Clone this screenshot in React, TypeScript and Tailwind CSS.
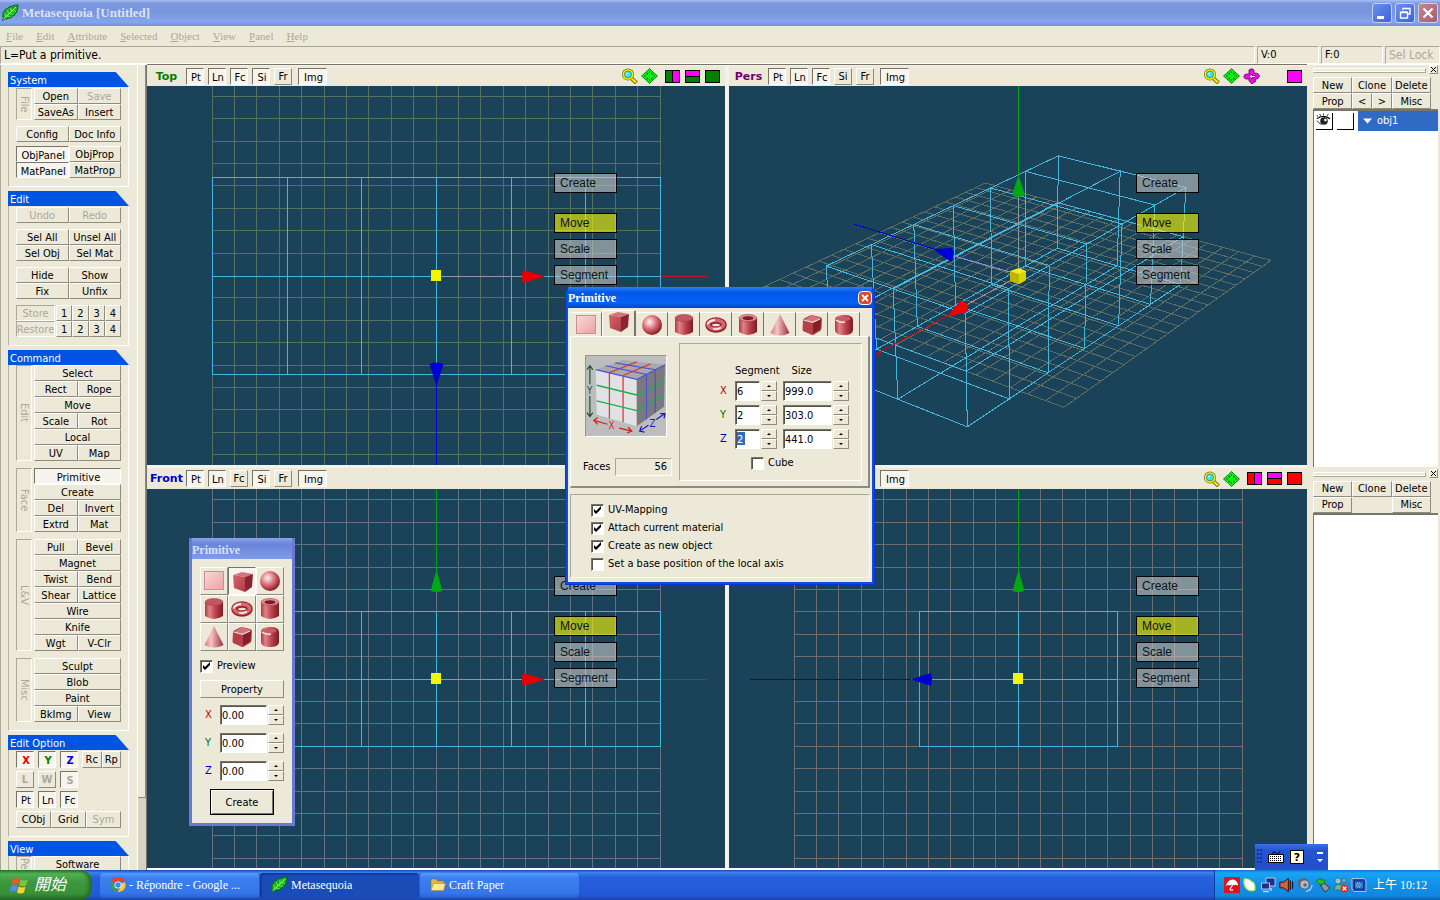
import React from "react";

type Pt = [number, number];

const RAISED = "border border-t-white border-l-white border-b-[#8e8b7c] border-r-[#8e8b7c] bg-[#ece9d8]";
const PRESSED = "border border-t-[#77756a] border-l-[#77756a] border-b-white border-r-white bg-[#f6f4ec] pt-0.5 pl-0.5";
const ETCHED = "border border-t-[#aca899] border-l-[#aca899] border-b-white border-r-white";

function Btn({ children, className = "", pressed, disabled }: { children: React.ReactNode; className?: string; pressed?: boolean; disabled?: boolean }) {
  return (
    <button
      type="button"
      disabled={disabled}
      className={`flex h-4 min-w-0 items-center justify-center overflow-hidden leading-none whitespace-nowrap ${pressed ? PRESSED : RAISED} ${disabled ? "text-[#aca899]" : ""} ${className}`}
    >
      {children}
    </button>
  );
}

/* ---------- left tool panel ---------- */

function Section({ title, children, className = "" }: { title: string; children: React.ReactNode; className?: string }) {
  return (
    <section className="mb-1 flex shrink-0 flex-col">
      <h2 className="h-[15px] bg-[#0054e3] pt-0.5 pl-0.5 leading-[13px] text-white [clip-path:polygon(0_0,89%_0,100%_100%,0_100%)]">{title}</h2>
      <div className={`flex flex-col border-r border-b border-l border-r-white border-b-white border-l-[#b5b19f] px-[7px] pb-2 ${className}`}>{children}</div>
    </section>
  );
}

function Tools({ label, rows }: { label: string; rows: string[][] }) {
  return (
    <div className="flex gap-0.5">
      <div className={`flex w-4 items-center justify-center leading-none text-[#aca899] [writing-mode:vertical-rl] ${ETCHED}`}>{label}</div>
      <div className="flex flex-1 flex-col">
        {rows.map((row, i) => (
          <div key={i} className="flex">
            {row.map((t) => (
              <Btn key={t} className="flex-1" pressed={t === "Primitive"} disabled={t === "Save"}>
                {t}
              </Btn>
            ))}
          </div>
        ))}
      </div>
    </div>
  );
}

function Pairs({ rows, off = [], down = [] }: { rows: string[][]; off?: string[]; down?: string[] }) {
  return (
    <div className="grid grid-cols-2">
      {rows.flat().map((t) => (
        <Btn key={t} disabled={off.includes(t)} pressed={down.includes(t)}>
          {t}
        </Btn>
      ))}
    </div>
  );
}

function ToolPanel() {
  return (
    <aside className="flex w-[147px] shrink-0 overflow-hidden border-t border-white">
      <div className="flex w-[137px] flex-col overflow-hidden border-l border-[#aca899] pt-[7px] pr-2 pl-[7px]">
        <Section title="System" className="gap-1 pt-px">
          <div className="mb-0.5">
            <Tools label="File" rows={[["Open", "Save"], ["SaveAs", "Insert"]]} />
          </div>
          <Pairs rows={[["Config", "Doc Info"]]} />
          <Pairs rows={[["ObjPanel", "ObjProp"], ["MatPanel", "MatProp"]]} down={["ObjPanel", "MatPanel"]} />
        </Section>
        <Section title="Edit" className="gap-1.5 pt-px">
          <Pairs rows={[["Undo", "Redo"]]} off={["Undo", "Redo"]} />
          <Pairs rows={[["Sel All", "Unsel All"], ["Sel Obj", "Sel Mat"]]} />
          <Pairs rows={[["Hide", "Show"], ["Fix", "Unfix"]]} />
          <div className="flex flex-col">
            {["Store", "Restore"].map((t) => (
              <div key={t} className="flex gap-px">
                <div className={`flex h-4 w-[39px] items-center justify-center overflow-hidden leading-none text-[#aca899] ${ETCHED}`}>{t}</div>
                <div className="grid flex-1 grid-cols-4">
                  {["1", "2", "3", "4"].map((n) => (
                    <Btn key={n}>{n}</Btn>
                  ))}
                </div>
              </div>
            ))}
          </div>
        </Section>
        <Section title="Command" className="gap-[7px]">
          <Tools label="Edit" rows={[["Select"], ["Rect", "Rope"], ["Move"], ["Scale", "Rot"], ["Local"], ["UV", "Map"]]} />
          <Tools label="Face" rows={[["Primitive"], ["Create"], ["Del", "Invert"], ["Extrd", "Mat"]]} />
          <Tools label="L&V" rows={[["Pull", "Bevel"], ["Magnet"], ["Twist", "Bend"], ["Shear", "Lattice"], ["Wire"], ["Knife"], ["Wgt", "V-Clr"]]} />
          <Tools label="Misc" rows={[["Sculpt"], ["Blob"], ["Paint"], ["BkImg", "View"]]} />
        </Section>
        <Section title="Edit Option" className="gap-[3px] pt-px">
          <div className="flex gap-1">
            <Btn pressed className="h-[17px] w-[18px] font-bold text-[#e00000]">X</Btn>
            <Btn pressed className="h-[17px] w-[18px] font-bold text-[#008000]">Y</Btn>
            <Btn pressed className="h-[17px] w-[18px] font-bold text-[#0000e0]">Z</Btn>
            <div className="grid flex-1 grid-cols-2">
              <Btn className="h-[17px]">Rc</Btn>
              <Btn className="h-[17px]">Rp</Btn>
            </div>
          </div>
          <div className="flex gap-1">
            <Btn disabled className="h-[17px] w-[18px] font-bold">L</Btn>
            <Btn disabled className="h-[17px] w-[18px] font-bold">W</Btn>
            <Btn disabled pressed className="h-[17px] w-[18px] font-bold">S</Btn>
          </div>
          <div className="flex gap-1">
            <Btn pressed className="h-[17px] w-[18px]">Pt</Btn>
            <Btn pressed className="h-[17px] w-[18px]">Ln</Btn>
            <Btn pressed className="h-[17px] w-[18px]">Fc</Btn>
          </div>
          <div className="grid grid-cols-3">
            <Btn className="h-[17px]">CObj</Btn>
            <Btn className="h-[17px]">Grid</Btn>
            <Btn disabled className="h-[17px]">Sym</Btn>
          </div>
        </Section>
        <Section title="View">
          <Tools label="Pe" rows={[["Software"]]} />
        </Section>
      </div>
      <div className="flex flex-1 flex-col border-r border-l border-r-[#77756a] border-l-white bg-[#d6d3c4]">
        <div className="h-[91%] border-r border-b border-[#8e8b7c] bg-[#ece9d8]" />
      </div>
    </aside>
  );
}

/* ---------- viewports ---------- */

const CYAN = "#45b5da";
const steps = (n: number) => Array.from({ length: 2 * n + 1 }, (_, i) => i - n);

function Cone({ dir, color }: { dir: "up" | "down" | "left" | "right"; color: string }) {
  const d = {
    up: "M0.5 -109L6.500 -88Q0.500 -86 -5.500 -88Z",
    down: "M0.500 110L7.500 88Q0.500 85 -6.500 88Z",
    left: "M-107 0.500L-87 -6Q-85 0.500 -87 7Z",
    right: "M109 0.500L87 -6Q85 0.500 87 7Z",
  }[dir];
  return <path d={d} fill={color} />;
}

interface OrthoProps {
  grid: string;
  halfW: number;
  top: number;
  bottom: number;
  segs: number;
  kind: "top" | "front" | "left";
}

function Ortho({ grid, halfW, top, bottom, segs, kind }: OrthoProps) {
  const cell = 22.4;
  const shift = kind === "top" ? 0.5 : 0;
  return (
    <svg viewBox="-289 -190 578 379" preserveAspectRatio="xMidYMid slice" className="absolute inset-0 h-full w-full">
      <g shapeRendering="crispEdges" strokeWidth="1">
        <g stroke={grid}>
          {steps(10).map((i) => {
            const x = Math.floor(i * cell) + 0.5;
            const y = Math.floor(i * cell - shift) + 0.5;
            return (
              <g key={i}>
                <line x1={x} x2={x} y1={-224} y2={224} />
                {i !== 0 && <line y1={y} y2={y} x1={-224} x2={224} />}
              </g>
            );
          })}
          <line x1={-224} x2={224} y1={0.5} y2={0.5} />
        </g>
        <g stroke={CYAN} fill="none">
          <rect x={-halfW + 0.5} y={top + 0.5} width={halfW * 2} height={bottom - top} />
          {steps(segs / 2).map((i) => {
            const x = Math.round((i * halfW * 2) / segs) + 0.5;
            return <line key={i} x1={x} x2={x} y1={top} y2={bottom} />;
          })}
          <line x1={-halfW} x2={halfW} y1={0.5} y2={0.5} />
        </g>
        {kind !== "left" && (
          <>
            <line x1={10} x2={88} y1={0.5} y2={0.5} stroke="#8f96a8" />
            <line x1={225} x2={271} y1={0.5} y2={0.5} stroke="#c81830" />
          </>
        )}
        {kind === "left" && (
          <>
            <line x1={-88} x2={-10} y1={0.5} y2={0.5} stroke="#7b96c8" />
            <line x1={-268} x2={-107} y1={0.5} y2={0.5} stroke="#0000d8" />
          </>
        )}
        {kind === "top" ? (
          <line x1={0.5} x2={0.5} y1={108} y2={190} stroke="#0000d8" />
        ) : (
          <line x1={0.5} x2={0.5} y1={-190} y2={-107} stroke="#00a010" />
        )}
      </g>
      {kind === "top" ? <Cone dir="down" color="#0000d4" /> : <Cone dir="up" color="#00a814" />}
      {kind === "left" ? <Cone dir="left" color="#0000d4" /> : <Cone dir="right" color="#e80000" />}
      <rect x="-5" y="-6" width="10" height="11" fill="#f5f500" />
    </svg>
  );
}

const SIN_P = 0.42;
const COS_P = 0.9075;
const SIN_A = 0.597;
const COS_A = 0.8022;

function project(x: number, y: number, z: number): Pt {
  const xc = -SIN_A * x - COS_A * z;
  const yc = -SIN_P * COS_A * x + COS_P * y + SIN_P * SIN_A * z;
  const zc = COS_P * COS_A * x + SIN_P * y - COS_P * SIN_A * z;
  const w = 1 - zc / 3714;
  return [(0.3705 * xc) / w, (-0.3705 * yc) / w];
}

function path(points: number[][], close = false) {
  return "M" + points.map(([x, y, z]) => project(x, y, z).map((v) => v.toFixed(1)).join(" ")).join("L") + (close ? "Z" : "");
}

const floorPath = steps(10)
  .map((i) => path([[i * 50, 0, -500], [i * 50, 0, 500]]) + path([[-500, 0, i * 50], [500, 0, i * 50]]))
  .join("");
const W = 499.5;
const H = 151.5;
const D = 220.5;
const boxPath = [
  ...steps(3).map((i) => path([[(i * W) / 3, -H, -D], [(i * W) / 3, H, -D], [(i * W) / 3, H, D], [(i * W) / 3, -H, D]], true)),
  ...steps(1).map((i) => path([[-W, i * H, -D], [W, i * H, -D], [W, i * H, D], [-W, i * H, D]], true)),
  ...steps(1).map((i) => path([[-W, -H, i * D], [W, -H, i * D], [W, H, i * D], [-W, H, i * D]], true)),
].join("");

function Perspective() {
  return (
    <svg viewBox="-289 -190 578 379" preserveAspectRatio="xMidYMid slice" className="absolute inset-0 h-full w-full">
      <g shapeRendering="crispEdges" fill="none">
        <path d={floorPath} stroke="#5f6c60" />
        <path d={boxPath} stroke={CYAN} />
        <path d="M0.5 -80V-8" stroke="#8a9aa0" />
        <path d="M-64 -20L-8 -4" stroke="#8a8ad8" />
        <path d="M-50 28L-8 5" stroke="#b08a98" />
        <path d="M0.5 -190V-100" stroke="#00a814" />
        <path d="M-164 -52L-78 -25" stroke="#0000c8" />
        <path d="M-69 39L-145 80" stroke="#d80010" />
      </g>
      <path d="M0.5 -101L7 -81Q0.5 -77 -6 -81Z" fill="#00a814" />
      <path d="M-85 -27L-66 -28Q-62 -21 -67 -14Z" fill="#0000d4" />
      <path d="M-71 41L-58 25Q-50 25 -50 34Q-52 37 -56 37Z" fill="#f00000" />
      <path d="M-8 -5L1 -8L8 -5V4L1 8L-8 5Z" fill="#f4ec20" />
      <path d="M-8 -5L1 -2V8L-8 5Z" fill="#c0b400" />
      <path d="M1 -2L8 -5V4L1 8Z" fill="#dcd400" />
    </svg>
  );
}

function Gizmo() {
  return (
    <div className="absolute top-1/2 left-1/2 -mt-[103px] ml-[118px] flex w-[63px] flex-col gap-1.5 font-['Liberation_Sans',sans-serif] text-[12px]">
      {["Create", "Move", "Scale", "Segment"].map((t) => (
        <button
          key={t}
          type="button"
          className={`h-5 border border-black pl-[5px] text-left leading-[18px] text-[#101418] ${t === "Create" ? "mb-3.5" : ""} ${t === "Move" ? "bg-[#ffff00]/60" : "bg-[#c8c8c8]/60"}`}
        >
          {t}
        </button>
      ))}
    </div>
  );
}

function Magnifier() {
  return (
    <svg width="17" height="16" viewBox="0 0 17 16">
      <path d="M9.5 9.5L15.500 15" stroke="#6b6b00" strokeWidth="3.8" />
      <path d="M9.5 9.5L15 14.5" stroke="#f8f000" strokeWidth="2.2" />
      <circle cx="7" cy="6.500" r="6" fill="#77760a" />
      <circle cx="7" cy="6.500" r="5.300" fill="#f8f000" />
      <circle cx="7" cy="6.500" r="3.500" fill="#30e8f0" stroke="#446" strokeWidth="0.6" />
      <path d="M5.500 6.500Q5.500 5 7 5" stroke="#fff" fill="none" />
    </svg>
  );
}

function PanIcon() {
  return (
    <svg width="17" height="16" viewBox="0 0 17 16">
      <path d="M8.500 0.500L11.500 3.500L16.500 8L11.500 12.500L8.500 15.500L5.500 12.500L0.500 8L5.500 3.500Z" fill="#10f018" stroke="#006a00" strokeWidth="0.8" />
      <path d="M5.500 4.800h1.600v1.600h-1.600zM10 4.800h1.600v1.600H10zM5.500 9.800h1.600v1.600h-1.600zM10 9.800h1.600v1.600H10z" fill="#006a00" />
      <path d="M8.500 3v2M8.500 11v2M3 8h2M12 8h2" stroke="#006a00" strokeWidth="0.800" />
    </svg>
  );
}

function OrbitIcon() {
  return (
    <svg width="17" height="16" viewBox="0 0 17 16">
      <path d="M6 2Q8.500 -0.500 11 2V5Q16 5 16.500 8Q16 11 12 11.500V13H13L9 16L6 13V11Q1 11.500 0.800 8.500Q1 6 4 6H6Z" fill="#e810e8" stroke="#600060" strokeWidth="0.8" />
      <path d="M6 8.500L9 6V7.500H12Q13 8.500 11.500 9.500H9V11Z" fill="#ece9d8" stroke="#600060" strokeWidth="0.7" />
    </svg>
  );
}

function Square({ base, split }: { base: string; split?: "v" | "h" }) {
  return (
    <svg width="15" height="13" viewBox="0 0 15 13" shapeRendering="crispEdges">
      <rect x="0.5" y="0.5" width="14" height="12" fill={base} stroke="#000" />
      {split === "v" && <rect x="7.500" y="0.5" width="7" height="12" fill="#ff00ff" stroke="#000" />}
      {split === "h" && <rect x="0.5" y="0.5" width="14" height="6" fill="#ff00ff" stroke="#000" />}
    </svg>
  );
}

interface ViewProps {
  name: string;
  color: string;
  up?: string[];
  square: string;
  pers?: boolean;
  tall?: boolean;
  children: React.ReactNode;
}

function Viewport({ name, color, up = [], square, pers, tall, children }: ViewProps) {
  return (
    <section className="flex min-h-0 min-w-0 flex-col">
      <header className={`flex shrink-0 items-center bg-[#ece9d8] pr-[5px] ${tall ? "h-[21px]" : "h-5"}`}>
        <span className={`w-[39px] text-center font-['DejaVu_Sans',sans-serif] text-[11px] leading-none font-bold ${color}`}>{name}</span>
        <div className="flex gap-1">
          {["Pt", "Ln", "Fc", "Si", "Fr"].map((t) => (
            <Btn key={t} pressed={!up.includes(t)} className="h-[17px] w-[18px]">
              {t}
            </Btn>
          ))}
          <Btn pressed className="ml-0.5 h-[17px] w-[29px]">Img</Btn>
        </div>
        <div className="ml-auto flex items-center gap-[3px]">
          <Magnifier />
          <PanIcon />
          {pers && <OrbitIcon />}
          <div className={`flex gap-[5px] ${pers ? "ml-6" : "ml-1"}`}>
            {!pers && <Square base={square} split="v" />}
            {!pers && <Square base={square} split="h" />}
            <Square base={square} />
          </div>
        </div>
      </header>
      <div className="relative flex-1 overflow-hidden bg-[#1a4259]">
        {children}
        <Gizmo />
      </div>
    </section>
  );
}

/* ---------- primitive shapes ---------- */

function ShapeDefs() {
  return (
    <svg className="absolute h-0 w-0" aria-hidden="true">
      <defs>
        <linearGradient id="plane" x1="0" y1="0" x2="1" y2="1">
          <stop offset="0" stopColor="#fbd9d9" />
          <stop offset="1" stopColor="#eba0a4" />
        </linearGradient>
        <linearGradient id="side" x1="0" x2="1">
          <stop offset="0" stopColor="#b03a42" />
          <stop offset="0.25" stopColor="#e08288" />
          <stop offset="0.6" stopColor="#b8404a" />
          <stop offset="1" stopColor="#7c1c26" />
        </linearGradient>
        <linearGradient id="cone" x1="0" x2="1">
          <stop offset="0" stopColor="#d87880" />
          <stop offset="0.35" stopColor="#f6c4c6" />
          <stop offset="1" stopColor="#9c2c36" />
        </linearGradient>
        <linearGradient id="face" x1="0" y1="0" x2="1" y2="1">
          <stop offset="0" stopColor="#d4646c" />
          <stop offset="1" stopColor="#b03c46" />
        </linearGradient>
        <radialGradient id="ball" cx="0.38" cy="0.35" r="0.65">
          <stop offset="0" stopColor="#fff4f4" />
          <stop offset="0.5" stopColor="#dd7880" />
          <stop offset="1" stopColor="#8c1e2a" />
        </radialGradient>
      </defs>
    </svg>
  );
}

const SHAPES = ["plane", "cube", "sphere", "cylinder", "torus", "tube", "cone", "round cube", "round cylinder"];

function Shape({ kind }: { kind: string }) {
  return (
    <svg width="24" height="24" viewBox="0 0 24 24">
      {kind === "plane" && <rect x="2.500" y="2.500" width="19" height="18" fill="url(#plane)" stroke="#c89090" />}
      {kind === "cube" && (
        <>
          <path d="M2 5L11 2L22 4L14 7Z" fill="#d4747c" />
          <path d="M2 5L14 7V22L3 18Z" fill="url(#face)" />
          <path d="M14 7L22 4L21 17L14 22Z" fill="#8c242e" />
        </>
      )}
      {kind === "sphere" && <circle cx="12" cy="12" r="10" fill="url(#ball)" />}
      {(kind === "cylinder" || kind === "tube") && (
        <>
          <path d="M3 5V19Q12 25 21 19V5Z" fill="url(#side)" />
          <ellipse cx="12" cy="5" rx="9" ry="3.500" fill={kind === "tube" ? "#e08c92" : "#c25660"} stroke="#a03a44" strokeWidth="0.5" />
          {kind === "tube" && <ellipse cx="12" cy="5.200" rx="5.500" ry="2" fill="#7a1c26" />}
        </>
      )}
      {kind === "torus" && (
        <>
          <ellipse cx="12" cy="12" rx="7.500" ry="4.500" fill="none" stroke="#98222c" strokeWidth="6.400" />
          <ellipse cx="11.800" cy="11.600" rx="7.800" ry="4.500" fill="none" stroke="#d4686e" strokeWidth="3.600" />
          <path d="M3.500 11.500Q5 7.500 11 7M9 15.500Q13 17 17 14.500" stroke="#ffecec" strokeWidth="1.800" fill="none" />
        </>
      )}
      {kind === "cone" && <path d="M12 1L21.500 20Q12 25 2.500 20Z" fill="url(#cone)" />}
      {kind === "round cube" && (
        <>
          <path d="M3 7Q3 6 4 5.500L10 2.500Q12 2 14 2.500L20 4Q22 4.500 22 6L21.500 15Q21.500 17 20 18L14 21.500Q12.500 22.500 11 21.500L4 18.500Q2.500 18 2.500 16Z" fill="#b4404a" />
          <path d="M3.500 7L11 3Q12.500 2.500 14 3L21 5L13 9Z" fill="#d4747a" />
          <path d="M13 9.500L21 6L20.500 16L13 21Z" fill="#861e2a" />
          <path d="M3.500 7L12.500 9.300L20 6" stroke="#f8d4d4" strokeWidth="1.200" fill="none" />
        </>
      )}
      {kind === "round cylinder" && (
        <>
          <path d="M3 7Q3 2 12 2Q21 2 21 7V17Q21 22 12 22Q3 22 3 17Z" fill="url(#side)" />
          <ellipse cx="12" cy="5.500" rx="6.500" ry="2.500" fill="#c65c66" />
          <path d="M4 7Q7 10 13 9" stroke="#fbe4e4" strokeWidth="1.500" fill="none" />
        </>
      )}
    </svg>
  );
}

/* ---------- form controls ---------- */

function Check({ label, checked }: { label: string; checked?: boolean }) {
  return (
    <label className="flex h-[18px] items-center gap-1">
      <span className="relative flex h-[13px] w-[13px]">
        <input type="checkbox" defaultChecked={checked} className="peer h-[13px] w-[13px] appearance-none border border-t-[#77756a] border-l-[#77756a] border-b-white border-r-white bg-white shadow-[inset_1px_1px_0_#55534a]" />
        <svg viewBox="0 0 13 13" className="pointer-events-none absolute inset-0 hidden peer-checked:block">
          <path d="M3 5v3l2 2 5-5V2L5 7z" fill="#000" />
        </svg>
      </span>
      {label}
    </label>
  );
}

function Spin({ label, value, width, selected }: { label: string; value: string; width: string; selected?: boolean }) {
  return (
    <span className="flex gap-px">
      <input
        aria-label={label}
        defaultValue={value}
        className={`h-5 border border-t-[#77756a] border-l-[#77756a] border-b-white border-r-white bg-white pl-px leading-none shadow-[inset_1px_1px_0_#55534a] outline-none ${width} ${selected ? "bg-[linear-gradient(#316ac5,#316ac5)] bg-[length:8px_13px] bg-[position:1px_2px] bg-no-repeat text-white" : ""}`}
      />
      <span className="flex flex-col">
        {["M2 4L4 2L6 4Z", "M2 2L4 4L6 2Z"].map((d) => (
          <button key={d} type="button" aria-label={label} className={`flex h-2.5 w-4 items-center justify-center ${RAISED}`}>
            <svg width="8" height="6" viewBox="0 0 8 6">
              <path d={d} />
            </svg>
          </button>
        ))}
      </span>
    </span>
  );
}

const AXES = [
  { axis: "X", color: "text-[#c00000]" },
  { axis: "Y", color: "text-[#007000]" },
  { axis: "Z", color: "text-[#0000c0]" },
];

function CubeDiagram() {
  return (
    <svg width="82" height="82" viewBox="0 0 82 82" className="border border-t-[#9a9788] border-l-[#9a9788] border-r-white border-b-white bg-[#bdbdbd]">
      <path d="M10 14L38 4L81 9L52 24Z" fill="#a9a9a9" />
      <path d="M10 14L52 24V72L11 60Z" fill="#e2e2e4" />
      <path d="M52 24L81 9L80 52L52 72Z" fill="#7a7a7e" />
      <path d="M24 17V64M38 20V68M24 17L52 6M38 20L66 8" stroke="#e03838" fill="none" strokeWidth="1.300" />
      <path d="M11 30L52 40L80 26M11 46L52 56L80 40" stroke="#18b050" fill="none" strokeWidth="1.400" />
      <path d="M10 14L52 24L81 9M20 10L62 19V65M30 7L71 14V58" stroke="#4a50e0" fill="none" strokeWidth="1.200" />
      <g fill="none" strokeWidth="1.200">
        <path d="M4 10V29M4 41V62M1 14L4 10L7 14M1 58L4 62L7 58" stroke="#0a5a2a" />
        <path d="M8 66L22 70M34 74L47 77M12 63L8 66L12 70M43 73L47 77L42 79" stroke="#e01818" />
        <path d="M55 77L64 71M72 65L81 59M57 72L55 77L60 78M76 59L81 59L80 64" stroke="#1818c8" />
      </g>
      <g fontFamily="DejaVu Sans Condensed, DejaVu Sans, sans-serif" fontSize="10">
        <text x="1" y="39" fill="#0a5a2a">Y</text>
        <text x="23" y="75" fill="#e01818">X</text>
        <text x="65" y="73" fill="#1818c8">Z</text>
      </g>
    </svg>
  );
}

function PrimitiveDialog() {
  return (
    <div role="dialog" aria-label="Primitive" className="absolute top-[287px] left-[565px] flex w-[310px] flex-col rounded-t-md bg-[#0a4fe0] px-[3px] pb-[3px] shadow-[inset_0_0_0_1px_#0831d9]">
      <div className="flex h-[21px] items-center justify-between bg-[linear-gradient(#2a80f8,#0558e8_25%,#0462f4_75%,#0346c8)] pt-px font-['Liberation_Serif',serif] text-[12px] font-bold text-white">
        <span>Primitive</span>
        <button type="button" aria-label="Close" className="flex h-[14px] w-[14px] items-center justify-center rounded-sm border border-white bg-[#d8482a]">
          <svg width="10" height="10" viewBox="0 0 10 10">
            <path d="M2 2L8 8M8 2L2 8" stroke="#fff" strokeWidth="1.800" />
          </svg>
        </button>
      </div>
      <div className="flex flex-col bg-[#ece9d8] px-0.5 pt-0.5 pb-1">
        <div className="flex h-[26px] items-end pl-px">
          {SHAPES.map((s, i) => (
            <button
              key={s}
              type="button"
              aria-label={s}
              className={`flex items-center justify-center ${i === 1 ? "h-[26px] w-[34px] rounded-t-xs border-t border-l border-white border-r-2 border-r-[#77756a] pb-1" : "h-6 border-t border-white border-r border-r-[#77756a]"} ${i === 0 ? "w-[31px]" : ""} ${i > 1 ? "w-8" : ""}`}
            >
              <Shape kind={s} />
            </button>
          ))}
        </div>
        <div className="flex h-[152px] gap-[7px] border border-r-2 border-b-2 border-t-white border-l-white border-r-[#8e8b7c] border-b-[#8e8b7c] pt-1.5 pr-1.5 pl-3.5">
          <div className="flex w-[87px] flex-col justify-between pt-3 pb-2.5">
            <CubeDiagram />
            <div className="-ml-0.5 flex items-center justify-between">
              <span>Faces</span>
              <output className={`h-[18px] w-[57px] pr-1 text-right leading-4 ${ETCHED}`}>56</output>
            </div>
          </div>
          <div className={`flex h-[138px] flex-1 flex-col pt-5 pl-10 ${ETCHED}`}>
            <div className="flex h-[15px] gap-3 pl-[15px] leading-[13px]">
              <span>Segment</span>
              <span>Size</span>
            </div>
            {[
              ["6", "999.0"],
              ["2", "303.0"],
              ["2", "441.0"],
            ].map(([seg, size], i) => (
              <div key={i} className="flex h-6 items-center">
                <span className={`w-[15px] ${AXES[i].color}`}>{AXES[i].axis}</span>
                <Spin label={`${AXES[i].axis} segment`} value={seg} width="w-[25px]" selected={i === 2} />
                <span className="w-1.5" />
                <Spin label={`${AXES[i].axis} size`} value={size} width="w-[49px]" />
              </div>
            ))}
            <div className="pt-[3px] pl-[31px]">
              <Check label="Cube" />
            </div>
          </div>
        </div>
        <div className={`mt-[6px] flex flex-col pt-1.5 pb-1 pl-5 ${ETCHED}`}>
          <Check label="UV-Mapping" checked />
          <Check label="Attach current material" checked />
          <Check label="Create as new object" checked />
          <Check label="Set a base position of the local axis" />
        </div>
      </div>
    </div>
  );
}

function PrimitivePalette() {
  return (
    <div role="dialog" aria-label="Primitive" className="absolute top-[538px] left-[189px] flex w-[106px] flex-col bg-[#6a78d4] px-[3px] pb-[3px]">
      <div className="flex h-[21px] items-center bg-[linear-gradient(#8aa4ec,#6b84dc_30%,#7f9ce8)] pt-0.5 font-['Liberation_Serif',serif] text-[12px] font-bold text-[#d5e2fa]">Primitive</div>
      <div className="flex flex-col bg-[#ece9d8] px-2 pt-2 pb-2">
        <div className="grid grid-cols-3">
          {SHAPES.map((s) => (
            <button key={s} type="button" aria-label={s} className={`flex h-7 items-center justify-center ${s === "cube" ? PRESSED : RAISED}`}>
              <Shape kind={s} />
            </button>
          ))}
        </div>
        <div className="pt-1.5">
          <Check label="Preview" checked />
        </div>
        <Btn className="mt-[5px] h-[18px]">Property</Btn>
        <div className="flex flex-col gap-2 pt-[7px]">
          {AXES.map(({ axis, color }) => (
            <div key={axis} className="flex items-center">
              <span className={`w-5 pl-[5px] ${color}`}>{axis}</span>
              <Spin label={axis} value="0.00" width="w-[47px]" />
            </div>
          ))}
        </div>
        <button type="button" className="mt-2 ml-2.5 h-[26px] w-16 border border-black bg-[#ece9d8] leading-none shadow-[inset_1px_1px_0_#fff,inset_-1px_-1px_0_#77756a]">Create</button>
      </div>
    </div>
  );
}

/* ---------- object and material lists ---------- */

function SidePanel({ nav, children, className }: { nav?: boolean; children?: React.ReactNode; className: string }) {
  return (
    <div className={`flex min-h-0 flex-col pl-1.5 ${className}`}>
      <div className="flex h-3 shrink-0 items-start justify-between">
        <div className="mt-[3px] h-[5px] w-[113px] border border-t-white border-l-white border-b-[#aca899] border-r-[#aca899] shadow-[inset_0_-1px_0_#fff]" />
        <button type="button" aria-label="Close" className={`flex h-[9px] w-[9px] items-center justify-center ${RAISED}`}>
          <svg width="7" height="7" viewBox="0 0 7 7">
            <path d="M1 1L6 6M6 1L1 6" stroke="#000" />
          </svg>
        </button>
      </div>
      <div className="grid shrink-0 grid-cols-6 pr-[7px]">
        <Btn className="col-span-2">New</Btn>
        <Btn className="col-span-2">Clone</Btn>
        <Btn className="col-span-2">Delete</Btn>
        <Btn className="col-span-2">Prop</Btn>
        {nav ? <Btn>&lt;</Btn> : <span />}
        {nav ? <Btn>&gt;</Btn> : <span />}
        <Btn className="col-span-2">Misc</Btn>
      </div>
      <div className="flex-1 border-t-2 border-l border-[#77756a] bg-white">{children}</div>
    </div>
  );
}

function Eye() {
  return (
    <svg width="17" height="17" viewBox="0 0 17 17" className="border-r border-b border-black">
      <path d="M1 6Q7 1 15 6" stroke="#000" strokeWidth="1.300" fill="none" />
      <path d="M2 4L1 2M5 3L4 1M8 2.500V0.500M12 3L13 1" stroke="#000" strokeWidth="0.800" />
      <circle cx="8.500" cy="8.500" r="4" fill="#222" />
      <circle cx="10" cy="7.500" r="1.400" fill="#fff" />
      <path d="M1 8Q3 11 6 12.500" stroke="#000" strokeWidth="0.800" fill="none" />
    </svg>
  );
}

/* ---------- taskbar ---------- */

function Leaf() {
  return (
    <svg width="18" height="18" viewBox="0 0 18 18">
      <path d="M1.500 16.500L2.500 14Q1 12 2 10.500Q1.500 8 3.500 7Q4 4.500 6.500 4.500Q8 2 10.500 2.500Q13 0.500 17 1Q17.500 4 16 6Q16.500 8.500 14.500 9.500Q14 12 11.500 12Q10.500 14.500 8 14Q6 15.500 4 14.800Z" fill="#10b020" stroke="#056010" strokeWidth="0.900" />
      <path d="M2.500 15L15 3" stroke="#c8ff80" strokeWidth="1" fill="none" />
      <path d="M5 12.500L4 9M7.500 10L6.500 6M10 7.500L10 4M6 12L9.500 12.500M8.500 9.500L12.500 10M11 7L15 7" stroke="#70f050" strokeWidth="0.900" fill="none" />
    </svg>
  );
}

function WindowsFlag() {
  return (
    <svg width="20" height="19" viewBox="0 0 20 19">
      <path d="M3 3Q6 1 9.500 3L8 9Q5 7 1.500 9Z" fill="#f0582a" />
      <path d="M10.500 3.500Q14 5.500 18 3.500L16 9.500Q13 11 9 9.500Z" fill="#7cc442" />
      <path d="M1 10Q4.500 8 7.500 10L6 16Q3 14 0 16Z" fill="#4a90f0" />
      <path d="M8.500 10.500Q12 12.500 15.500 10.500L14 16.500Q10.500 18.500 7 16.500Z" fill="#fcd030" />
    </svg>
  );
}

function TrayIcons() {
  return (
    <div className="flex items-center gap-0.5">
      <svg width="16" height="16" viewBox="0 0 16 16">
        <rect width="16" height="16" fill="#d81820" />
        <path d="M2 9Q3 3 9 2.500Q14 3.500 14 9Q12.500 7 10.500 8.200Q8 6.500 6 8.500Q4 7.500 2 9Z" fill="#fff" />
        <path d="M9 7L6 12.500Q7 14 9 12.500" stroke="#fff" strokeWidth="1.200" fill="none" />
      </svg>
      <svg width="16" height="16" viewBox="0 0 16 16">
        <path d="M2 2Q7 1 9 4Q14 5 13 13Q10 15 6 13Q1 10 2 2Z" fill="#fff" stroke="#98dc40" strokeWidth="1.200" />
      </svg>
      <svg width="16" height="16" viewBox="0 0 16 16">
        <rect x="6" y="1" width="9" height="8" fill="#1c2f90" stroke="#b8c4dc" />
        <rect x="1.500" y="6" width="8" height="6" fill="#1c2f90" stroke="#b8c4dc" />
        <path d="M3 14.500h6M11 11v3" stroke="#c8d0e0" strokeWidth="1.500" />
      </svg>
      <svg width="17" height="16" viewBox="0 0 18 16">
        <path d="M2 5h4l5-4v14l-5-4H2z" fill="#d8603a" stroke="#301008" />
        <path d="M13 3v10M15.500 4v8" stroke="#201018" strokeWidth="1.200" />
      </svg>
      <svg width="16" height="16" viewBox="0 0 16 16">
        <circle cx="6.500" cy="6.500" r="5.800" fill="#5c6674" />
        <circle cx="7.500" cy="7.500" r="4" fill="#b4bac6" />
        <circle cx="8" cy="8" r="1.800" fill="#5c6674" />
        <path d="M9 14.500Q15 13 15 8" stroke="#b8d4fc" fill="none" strokeWidth="1.200" />
      </svg>
      <svg width="16" height="16" viewBox="0 0 16 16">
        <path d="M5 8L9 6L15 11L10 15Z" fill="#8c98a4" stroke="#303840" />
        <path d="M1 4L6 1L6 3L10 3L9 7L6 7L7 9Z" fill="#28c030" stroke="#087010" strokeWidth="0.700" />
      </svg>
      <svg width="16" height="16" viewBox="0 0 16 16">
        <circle cx="5" cy="4" r="3" fill="#90c8d0" stroke="#286070" strokeWidth="0.600" />
        <circle cx="11" cy="3.500" r="2.500" fill="#5ca4b8" stroke="#286070" strokeWidth="0.600" />
        <path d="M1 13Q2 7 6 7Q10 7 12 13Z" fill="#68b890" stroke="#205848" strokeWidth="0.600" />
        <circle cx="11.500" cy="11.500" r="4" fill="#e03020" />
        <path d="M9.800 9.800L13.200 13.200M13.200 9.800L9.800 13.200" stroke="#fff" strokeWidth="1.300" />
      </svg>
      <svg width="16" height="16" viewBox="0 0 16 16">
        <path d="M1 1.500H13L15 4V14.500H3L1 12Z" fill="#1c4aa8" stroke="#a8c0e4" />
        <rect x="3.500" y="4" width="9" height="8" fill="#2a78d8" stroke="#10307c" />
        <path d="M6 6h4M5 8h6M6 10h4" stroke="#bfe0ff" strokeDasharray="1 1" />
      </svg>
    </div>
  );
}

function Task({ icon, label, active }: { icon: React.ReactNode; label: string; active?: boolean }) {
  return (
    <button
      type="button"
      className={`flex h-[25px] w-[159px] items-center gap-[3px] rounded-sm pl-2.5 text-white ${active ? "bg-[#1a4cb8] shadow-[inset_1px_1px_2px_#0c2c80]" : "bg-[linear-gradient(#5a9cf8,#3a7ff0_20%,#3576ea_80%,#2860cc)]"}`}
    >
      {icon}
      <span>{label}</span>
    </button>
  );
}

function Taskbar() {
  return (
    <footer className="flex h-[30px] shrink-0 items-center bg-[linear-gradient(#1c48b0,#3a80f0_8%,#2560dc_25%,#2259d6_85%,#1a44ac)] font-['Liberation_Serif','Noto_Sans_CJK_TC',serif] text-[12px]">
      <button type="button" className="mr-2 flex h-full w-[92px] items-center gap-1 rounded-r-xl bg-[linear-gradient(#2c7c2c,#55b055_12%,#3c983c_40%,#389038_80%,#246824)] pl-2.5 text-[16px] text-white italic shadow-[inset_-3px_0_4px_#246824]">
        <WindowsFlag />
        開始
      </button>
      <div className="flex gap-px">
        <Task
          label="- Répondre - Google ..."
          icon={
            <svg width="16" height="16" viewBox="0 0 16 16">
              <path d="M8 8L1.500 4A7 7 0 0 1 14.800 5H8Z" fill="#e04438" />
              <path d="M8 8L14.800 5A7 7 0 0 1 7.500 15L11 9Z" fill="#fcc934" />
              <path d="M1.500 4A7 7 0 0 0 7.500 15L11 9L5 9Z" fill="#34a050" />
              <circle cx="8" cy="8" r="3.500" fill="#fff" />
              <circle cx="8" cy="8" r="2.700" fill="#4285f4" />
            </svg>
          }
        />
        <Task label="Metasequoia" active icon={<Leaf />} />
        <Task
          label="Craft Paper"
          icon={
            <svg width="16" height="14" viewBox="0 0 16 14">
              <path d="M1 12V2Q1 1 2 1H6L7.500 3H13Q14 3 14 4V12Z" fill="#e8b83c" stroke="#94701c" strokeWidth="0.600" />
              <path d="M1 12.500L3.500 5.500H15.500L13.500 12.500Z" fill="#fdea98" stroke="#b08c2c" strokeWidth="0.600" />
            </svg>
          }
        />
      </div>
      <div className="ml-auto flex h-full w-[226px] items-center gap-1.5 border-l border-[#0c3ca0] bg-[linear-gradient(#1474d8,#18a4f4_10%,#1290e8_50%,#1188e0_85%,#0c60b0)] pl-[9px] text-white">
        <TrayIcons />
        <time>上午 10:12</time>
      </div>
    </footer>
  );
}

function LanguageBar() {
  return (
    <div className="absolute right-28 bottom-[30px] flex h-[26px] w-[73px] items-center gap-1.5 bg-[linear-gradient(#3a70e8,#2355cf_25%,#2050c8)] pl-0.5">
      <svg width="5" height="18" viewBox="0 0 5 18">
        <path d="M1 1v16M4 1v16" stroke="#0c2c90" strokeWidth="1.500" strokeDasharray="2 2" />
      </svg>
      <svg width="16" height="14" viewBox="0 0 16 14">
        <path d="M4 4Q6 0 8 3T12 1" stroke="#000" fill="none" />
        <rect x="0.500" y="4.500" width="15" height="8" fill="#fff" stroke="#000" />
        <path d="M2 6.500h12M2 8.500h12M2 10.500h12" stroke="#000" strokeDasharray="1 1" />
      </svg>
      <span className="flex h-[14px] w-[14px] items-center justify-center border border-black bg-[#fffce0] font-['DejaVu_Sans',sans-serif] text-[11px] leading-none font-bold">?</span>
      <svg width="8" height="16" viewBox="0 0 8 16" className="ml-1.5">
        <path d="M1 3h6v2H1zM1 10h6L4 13z" fill="#fff" />
      </svg>
    </div>
  );
}

/* ---------- window chrome ---------- */

function TitleBar() {
  const cap = "flex h-5 w-5 items-center justify-center rounded-[3px] border border-[#c4d2f6]";
  return (
    <header className="flex h-[26px] shrink-0 items-center bg-[linear-gradient(#a8bef4,#7b96dd_14%,#7a96df_50%,#84a5ec_85%,#7690dc)] pr-0.5 pl-px">
      <Leaf />
      <h1 className="ml-[3px] font-['Liberation_Serif',serif] text-[13px] font-bold text-[#d8e4f8]">Metasequoia [Untitled]</h1>
      <div className="ml-auto flex gap-[3px]">
        <button type="button" aria-label="Minimize" className={`${cap} bg-[linear-gradient(135deg,#6c90ee,#3c62d8)]`}>
          <svg width="16" height="16" viewBox="0 0 16 16">
            <rect x="3" y="11" width="7" height="3" fill="#fff" />
          </svg>
        </button>
        <button type="button" aria-label="Restore" className={`${cap} bg-[linear-gradient(135deg,#6c90ee,#3c62d8)]`}>
          <svg width="16" height="16" viewBox="0 0 16 16">
            <path d="M6 5V3.500h7V9h-2M6 3.500h7M3.500 7.500h7V13h-7zM3.500 7h7" stroke="#fff" strokeWidth="1.400" fill="none" />
          </svg>
        </button>
        <button type="button" aria-label="Close" className={`${cap} bg-[linear-gradient(135deg,#c8848c,#a85c70)]`}>
          <svg width="16" height="16" viewBox="0 0 16 16">
            <path d="M3.500 3.500L12.500 12.500M12.500 3.500L3.500 12.500" stroke="#fff" strokeWidth="2.200" />
          </svg>
        </button>
      </div>
    </header>
  );
}

export default function App() {
  return (
    <div className="relative flex h-screen flex-col overflow-hidden bg-[#ece9d8] font-['DejaVu_Sans_Condensed','Noto_Sans',sans-serif] text-[11px] text-black">
      <ShapeDefs />
      <TitleBar />
      <nav className="flex h-5 shrink-0 items-center gap-[13px] pl-1.5 font-['Liberation_Serif',serif] text-[11px] text-[#aca899]">
        {["File", "Edit", "Attribute", "Selected", "Object", "View", "Panel", "Help"].map((m) => (
          <a key={m} href="#">
            <span className="underline">{m[0]}</span>
            {m.slice(1)}
          </a>
        ))}
      </nav>
      <div className="flex h-[18px] shrink-0 gap-0.5 text-[12px] leading-4">
        <div className={`flex-1 pl-[3px] ${ETCHED}`}>L=Put a primitive.</div>
        <div className={`w-[62px] pl-[3px] text-[11px] ${ETCHED}`}>V:0</div>
        <div className={`w-[62px] pl-[3px] text-[11px] ${ETCHED}`}>F:0</div>
        <div className={`w-[55px] pl-[3px] whitespace-nowrap text-[#aca899] ${ETCHED}`}>Sel Lock</div>
      </div>
      <main className="flex min-h-0 flex-1">
        <ToolPanel />
        <div className="grid min-w-0 flex-1 grid-cols-2 grid-rows-[399fr_400fr] gap-x-1 gap-y-[3px] border-t border-b-2 border-t-[#77756a] border-b-white bg-[#f4f2ea] pt-px">
          <Viewport name="Top" color="text-[#008000]" square="#008000" up={["Fr"]}>
            <Ortho kind="top" grid="#54705f" halfW={224} top={-99} bottom={98} segs={6} />
          </Viewport>
          <Viewport name="Pers" color="text-[#700070]" square="#ff00ff" up={["Si", "Fr"]} pers>
            <Perspective />
          </Viewport>
          <Viewport name="Front" color="text-[#0000d0]" square="#0000ff" up={["Fc", "Fr"]} tall>
            <Ortho kind="front" grid="#657080" halfW={224} top={-68} bottom={67} segs={6} />
          </Viewport>
          <Viewport name="Left" color="text-[#d00000]" square="#ff0000" up={["Fr"]} tall>
            <Ortho kind="left" grid="#6e6e70" halfW={99} top={-68} bottom={67} segs={2} />
          </Viewport>
        </div>
        <aside className="flex w-[133px] shrink-0 flex-col border-t border-white pr-0.5">
          <SidePanel nav className="flex-1">
            <div className="flex h-5 items-center gap-1 pl-0.5">
              <Eye />
              <span className="h-[17px] w-[17px] border-r border-b border-black" />
              <div className="flex h-full flex-1 items-center gap-[5px] bg-[#316ac5] pl-[5px] text-white">
                <svg width="9" height="6" viewBox="0 0 9 6">
                  <path d="M0 0.500h9L4.500 5.500z" fill="#fff" />
                </svg>
                obj1
              </div>
            </div>
          </SidePanel>
          <SidePanel className="flex-1 pt-0.5" />
        </aside>
      </main>
      <Taskbar />
      <LanguageBar />
      <PrimitivePalette />
      <PrimitiveDialog />
    </div>
  );
}
